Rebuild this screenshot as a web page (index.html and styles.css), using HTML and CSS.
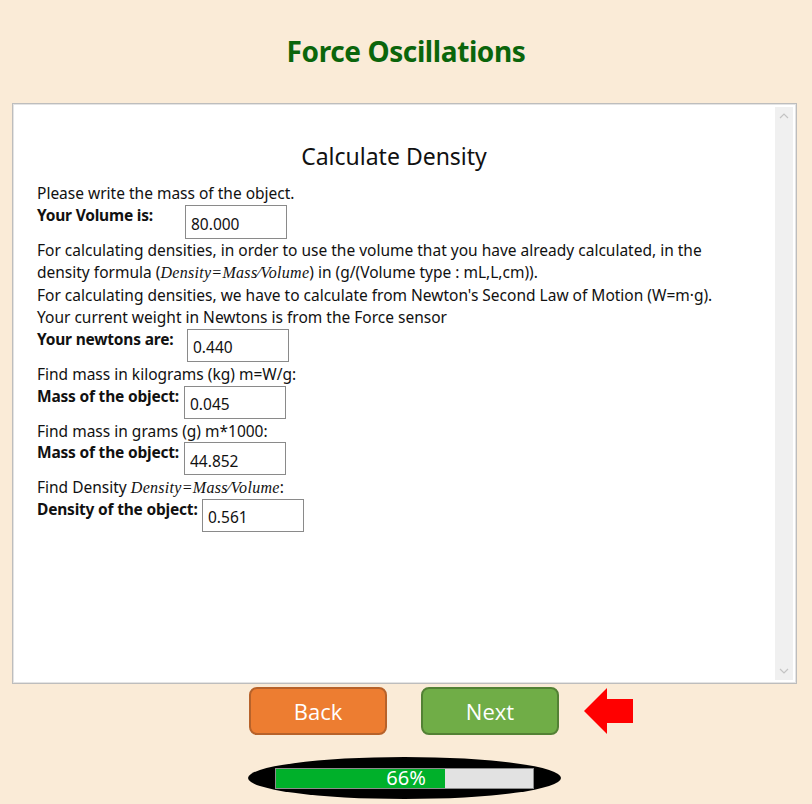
FILE: index.html
```html
<!DOCTYPE html>
<html lang="en">
<head>
  <meta charset="UTF-8">
  <meta name="viewport" content="width=device-width, initial-scale=1.0">
  <title>Force Oscillations</title>
  <link rel="stylesheet" href="styles.css">
</head>
<body>
  <div class="header">
    <h1>Force Oscillations</h1>
  </div>

  <div class="frame">
    <div class="frame-content">
      <h2>Calculate Density</h2>
      <p>Please write the mass of the object.</p>
      <div class="field">
        <label class="lbl lbl--volume">Your Volume is:</label>
        <input class="val" type="text" value="80.000" readonly>
      </div>
      <p>For calculating densities, in order to use the volume that you have already calculated, in the<br>
        density formula (<span class="math">Density=Mass⁄Volume</span>) in (g/(Volume type : mL,L,cm)).</p>
      <p>For calculating densities, we have to calculate from Newton's Second Law of Motion (W=m·g).</p>
      <p>Your current weight in Newtons is from the Force sensor</p>
      <div class="field">
        <label class="lbl lbl--newtons">Your newtons are:</label>
        <input class="val val--low" type="text" value="0.440" readonly>
      </div>
      <p>Find mass in kilograms (kg) m=W/g:</p>
      <div class="field">
        <label class="lbl lbl--mass">Mass of the object:</label>
        <input class="val val--low" type="text" value="0.045" readonly>
      </div>
      <p>Find mass in grams (g) m*1000:</p>
      <div class="field">
        <label class="lbl lbl--mass">Mass of the object:</label>
        <input class="val val--low" type="text" value="44.852" readonly>
      </div>
      <p>Find Density <span class="math">Density=Mass⁄Volume</span>:</p>
      <div class="field">
        <label class="lbl lbl--density">Density of the object:</label>
        <input class="val val--low" type="text" value="0.561" readonly>
      </div>
    </div>
    <div class="scrollbar">
      <svg width="10" height="6" viewBox="0 0 10 6"><path d="M1 5 L5 1 L9 5" fill="none" stroke="#c4c4c4" stroke-width="1.2"/></svg>
      <svg width="10" height="6" viewBox="0 0 10 6"><path d="M1 1 L5 5 L9 1" fill="none" stroke="#c4c4c4" stroke-width="1.2"/></svg>
    </div>
  </div>

  <div class="nav">
    <button class="btn btn--back">Back</button>
    <div class="next-wrap">
      <button class="btn btn--next">Next</button>
      <svg class="arrow" width="50" height="47" viewBox="0 0 50 47">
        <polygon points="0,23 23,0 23,11 49,11 49,35 23,35 23,46" fill="#ff0000"/>
      </svg>
    </div>
  </div>

  <div class="progress">
    <div class="progress-bar">
      <div class="progress-fill" style="width: 66%"></div>
      <span class="progress-text">66%</span>
    </div>
  </div>
</body>
</html>
```

FILE: styles.css
```css
body {
  margin: 0;
  background-color: #faebd7;
  font-family: "Noto Sans", "Open Sans", sans-serif;
  color: #111;
  height: 804px;
  overflow: hidden;
}

.header {
  height: 101px;
  padding-bottom: 2px;
  display: flex;
  justify-content: center;
  align-items: center;
}

.header h1 {
  margin: 0;
  font-size: 28px;
  font-weight: bold;
  color: #0b650b;
  letter-spacing: -0.4px;
}

.frame {
  margin-left: 12px;
  width: 785px;
  height: 581px;
  box-sizing: border-box;
  border: 1px solid #bdbdbd;
  box-shadow: inset 0 0 0 1px #e4e4e4;
  background-color: #fff;
  display: flex;
}

.frame-content {
  flex: 1;
  padding: 36px 0 0 24px;
  font-size: 15.5px;
  line-height: 22.6px;
}

.frame-content h2 {
  margin: 0 0 10px -24px;
  font-size: 23px;
  font-weight: normal;
  line-height: 32px;
  text-align: center;
}

.frame-content p {
  margin: 0;
}

.math {
  font-family: "Liberation Serif", serif;
  font-style: italic;
  font-size: 16px;
  line-height: 20px;
  letter-spacing: 0.3px;
}

.field {
  display: flex;
  align-items: flex-start;
  height: 34px;
  line-height: 21px;
}

.lbl {
  font-weight: bold;
  letter-spacing: -0.2px;
  flex: none;
}

.lbl--volume { width: 148px; }
.lbl--newtons { width: 150px; }
.lbl--mass { width: 147px; }
.lbl--density { width: 165px; }

.val {
  width: 102px;
  height: 34px;
  box-sizing: border-box;
  border: 1px solid #8a8a8a;
  padding: 4px 0 0 5px;
  font-family: inherit;
  font-size: 15.5px;
  color: #111;
  outline: none;
}

.val--low {
  height: 33px;
}

.scrollbar {
  width: 18px;
  margin: 3px 3px 3px 0;
  background-color: #f0f0f0;
  display: flex;
  flex-direction: column;
  justify-content: space-between;
  align-items: center;
  padding: 6px 0;
  box-sizing: border-box;
}

.nav {
  display: flex;
  justify-content: center;
  gap: 34px;
  margin-top: 3px;
  padding-right: 4px;
}

.next-wrap {
  position: relative;
}

.btn {
  width: 138px;
  height: 48px;
  border-radius: 8px;
  font-family: "Open Sans", "Noto Sans", sans-serif;
  font-size: 22px;
  color: #fff;
  cursor: pointer;
}

.btn--back {
  background-color: #ed7d31;
  border: 2px solid #b7622a;
}

.btn--next {
  background-color: #70ad47;
  border: 2px solid #538135;
}

.arrow {
  position: absolute;
  left: 163px;
  top: 1px;
}

.progress {
  margin: 22px auto 0;
  width: 313px;
  height: 42px;
  background-color: #000;
  border-radius: 50%;
  display: flex;
  justify-content: center;
  align-items: center;
  position: relative;
  left: -2px;
}

.progress-bar {
  position: relative;
  width: 259px;
  height: 21px;
  box-sizing: border-box;
  background-color: #e2e2e2;
  border: 1px solid #8c8c8c;
}

.progress-fill {
  height: 100%;
  background-color: #00b02a;
}

.progress-text {
  position: absolute;
  left: 4px;
  right: 0;
  top: -4px;
  text-align: center;
  color: #fff;
  font-size: 20px;
  line-height: 26px;
}
```
